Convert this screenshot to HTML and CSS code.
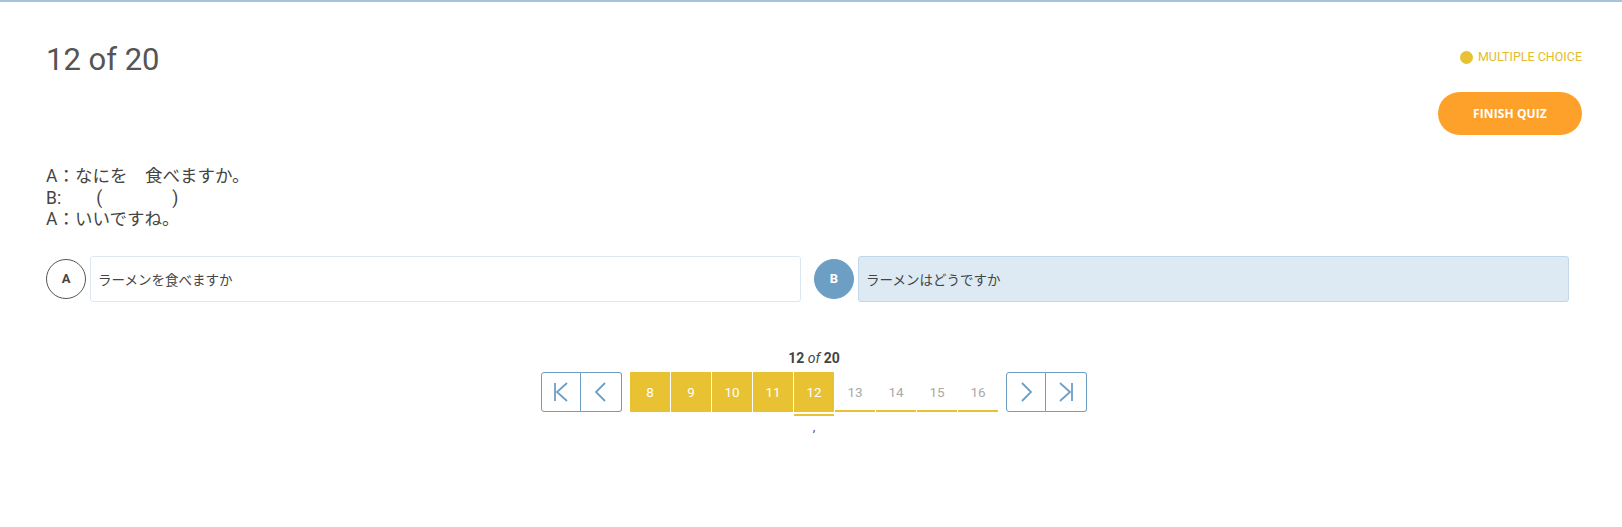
FILE: index.html
```html
<!DOCTYPE html>
<html lang="ja">
<head>
<meta charset="utf-8">
<title>Quiz</title>
<link rel="stylesheet" href="styles.css">
</head>
<body>
<div class="topbar"></div>
<main class="quiz">
  <header class="quiz-head">
    <h1 class="quiz-count">12 of 20</h1>
    <div class="quiz-side">
      <div class="quiz-type"><span class="quiz-dot"></span>MULTIPLE CHOICE</div>
      <button class="finish-btn">FINISH QUIZ</button>
    </div>
  </header>

  <div class="question">
    <div>A：なにを　食べますか。</div>
    <div>B:　　(　　　　)</div>
    <div>A：いいですね。</div>
  </div>

  <div class="options">
    <div class="option">
      <span class="opt-letter">A</span>
      <div class="opt-box">ラーメンを食べますか</div>
    </div>
    <div class="option selected">
      <span class="opt-letter">B</span>
      <div class="opt-box">ラーメンはどうですか</div>
    </div>
  </div>

  <nav class="pager">
    <div class="pager-label"><b>12</b> <i>of</i> <b>20</b></div>
    <div class="pager-row">
      <div class="nav-group">
        <button class="nav-btn" aria-label="first"><svg viewBox="0 0 20 20" width="20" height="20"><path d="M4 1V19M16 1L6 10L16 19"/></svg></button>
        <button class="nav-btn" aria-label="prev"><svg viewBox="0 0 20 20" width="20" height="20"><path d="M14 1L5 10L14 19"/></svg></button>
      </div>
      <ul class="pages">
        <li class="page done">8</li>
        <li class="page done">9</li>
        <li class="page done">10</li>
        <li class="page done">11</li>
        <li class="page done current">12</li>
        <li class="page">13</li>
        <li class="page">14</li>
        <li class="page">15</li>
        <li class="page">16</li>
      </ul>
      <div class="nav-group">
        <button class="nav-btn" aria-label="next"><svg viewBox="0 0 20 20" width="20" height="20"><path d="M6 1L15 10L6 19"/></svg></button>
        <button class="nav-btn" aria-label="last"><svg viewBox="0 0 20 20" width="20" height="20"><path d="M16 1V19M4 1L14 10L4 19"/></svg></button>
      </div>
    </div>
    <div class="pager-comma">,</div>
  </nav>
</main>
</body>
</html>
```

FILE: styles.css
```css
* { box-sizing: border-box; }

html, body {
  margin: 0;
  padding: 0;
  background: #fff;
}

body {
  font-family: Roboto, "Noto Sans CJK JP", sans-serif;
  color: #444;
}

.topbar {
  height: 2px;
  background: #a3c3df;
}

.quiz {
  padding: 40px 40px 0 46px;
}

.quiz-head {
  display: flex;
  justify-content: space-between;
  align-items: flex-start;
}

.quiz-count {
  margin: 0;
  font-family: Roboto, sans-serif;
  font-weight: 400;
  font-size: 31px;
  line-height: 36px;
  color: #555;
}

.quiz-side {
  display: flex;
  flex-direction: column;
  align-items: flex-end;
}

.quiz-type {
  display: flex;
  align-items: center;
  gap: 5px;
  margin-top: 7px;
  font-family: Roboto, sans-serif;
  font-size: 12.5px;
  line-height: 16px;
  color: #e3bc2c;
}

.quiz-dot {
  width: 13px;
  height: 13px;
  border-radius: 50%;
  background: #e8c232;
}

.finish-btn {
  margin-top: 27px;
  width: 144px;
  height: 43px;
  border: 0;
  border-radius: 22px;
  background: #fda12b;
  color: #fff;
  font-family: "Open Sans", sans-serif;
  font-weight: 700;
  font-size: 12px;
  letter-spacing: 0.1px;
}

.question {
  margin-top: 31px;
  font-family: Roboto, "Noto Sans CJK JP", sans-serif;
  font-size: 17.5px;
  line-height: 21.5px;
  color: #444;
}

.options {
  margin-top: 25px;
  display: grid;
  grid-template-columns: 1fr 1fr;
}

.option {
  display: flex;
  align-items: center;
  gap: 4px;
  padding-right: 13px;
}

.opt-letter {
  flex: none;
  width: 40px;
  height: 40px;
  border-radius: 50%;
  border: 1px solid #555;
  display: flex;
  align-items: center;
  justify-content: center;
  font-family: Roboto, sans-serif;
  font-weight: 700;
  font-size: 13px;
  color: #444;
}

.opt-box {
  flex: 1;
  height: 46px;
  display: flex;
  align-items: center;
  padding-left: 7px;
  border: 1px solid #dde7f0;
  border-radius: 3px;
  font-family: "Noto Sans CJK JP", sans-serif;
  font-size: 13.5px;
  color: #444;
}

.option.selected .opt-letter {
  background: #6d9fc5;
  border-color: #6d9fc5;
  color: #fff;
}

.option.selected .opt-box {
  background: #dde9f3;
  border-color: #c3d7e8;
}

.pager {
  margin-top: 47px;
  display: flex;
  flex-direction: column;
  align-items: center;
}

.pager-label {
  font-family: Roboto, sans-serif;
  font-size: 14px;
  line-height: 18px;
  color: #444;
}

.pager-label b { font-weight: 700; }
.pager-label i { font-style: italic; }

.pager-row {
  margin-top: 5px;
  display: flex;
  align-items: flex-start;
  gap: 8px;
}

.nav-group {
  display: flex;
}

.nav-btn {
  width: 40px;
  height: 40px;
  padding: 0;
  background: #fff;
  border: 1px solid #6d9fc5;
  display: flex;
  align-items: center;
  justify-content: center;
}

.nav-btn + .nav-btn {
  border-left: 0;
  width: 41px;
}

.nav-btn:first-child { border-radius: 3px 0 0 3px; }
.nav-btn:last-child { border-radius: 0 3px 3px 0; }

.nav-btn svg path {
  fill: none;
  stroke: #6d9fc5;
  stroke-width: 1.8;
}

.pages {
  list-style: none;
  margin: 0;
  padding: 0;
  display: flex;
  gap: 1px;
}

.page {
  width: 40px;
  height: 40px;
  display: flex;
  align-items: center;
  justify-content: center;
  font-family: Roboto, sans-serif;
  font-size: 13.5px;
  color: #aaa;
  box-shadow: inset 0 -2px 0 #e8c232;
}

.page.done {
  background: #e8c232;
  color: #fff;
  box-shadow: none;
}

.page.current {
  box-shadow: 0 2px 0 #fff, 0 4px 0 #e8c232;
}

.pager-comma {
  margin-top: 7px;
  font-family: Roboto, sans-serif;
  font-size: 13px;
  line-height: 16px;
  color: #555;
}
```
